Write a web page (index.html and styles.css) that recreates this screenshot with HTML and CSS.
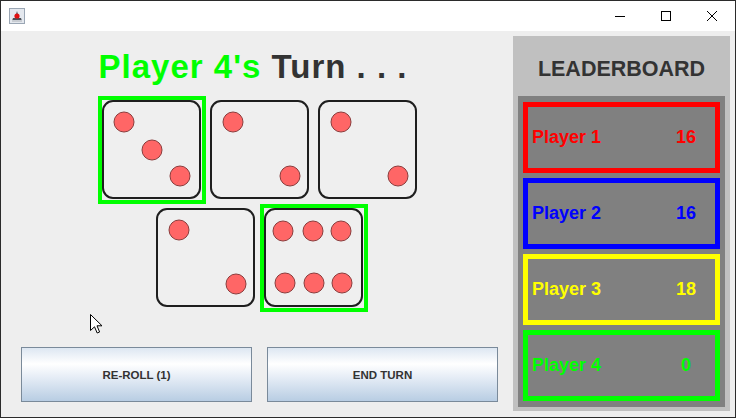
FILE: index.html
```html
<!DOCTYPE html>
<html>
<head>
<meta charset="utf-8">
<link rel="stylesheet" href="styles.css">
</head>
<body>
<div class="window">
  <div class="titlebar">
    <svg class="app-icon" width="16" height="16" viewBox="0 0 16 16">
      <rect x="0.5" y="0.5" width="15" height="15" fill="#e4e8ee" stroke="#9aa6b4"/>
      <path d="M3 13 L13 13 L12 10 L10 10 L8 3 L6 10 L4 10 Z" fill="#4a4f57"/>
      <rect x="3" y="12" width="10" height="2" fill="#c8ccd2"/>
      <circle cx="8" cy="8" r="2.6" fill="#e01010"/>
    </svg>
    <div class="controls">
      <svg class="ctl" width="46" height="30" viewBox="0 0 46 30"><path d="M18 15.5 H28" stroke="#000" stroke-width="1"/></svg>
      <svg class="ctl" width="46" height="30" viewBox="0 0 46 30"><rect x="18.5" y="10.5" width="9" height="9" fill="none" stroke="#000" stroke-width="1"/></svg>
      <svg class="ctl" width="46" height="30" viewBox="0 0 46 30"><path d="M18 10 L28 20 M28 10 L18 20" stroke="#000" stroke-width="1"/></svg>
    </div>
  </div>
  <div class="content">
    <div class="main">
      <div class="turn"><span class="turn-player">Player 4's</span> Turn . . .</div>
      <div class="dice">
        <div class="dice-row">
          <div class="cell sel">
            <svg class="die" viewBox="0 0 100 100"><rect x="1" y="1" width="97" height="97" rx="10"/><circle cx="22" cy="22" r="10"/><circle cx="50" cy="50" r="10"/><circle cx="78" cy="76" r="10"/></svg>
          </div>
          <div class="cell">
            <svg class="die" viewBox="0 0 100 100"><rect x="1" y="1" width="97" height="97" rx="10"/><circle cx="23" cy="22" r="10"/><circle cx="80" cy="76" r="10"/></svg>
          </div>
          <div class="cell">
            <svg class="die" viewBox="0 0 100 100"><rect x="1" y="1" width="97" height="97" rx="10"/><circle cx="23" cy="22" r="10"/><circle cx="80" cy="76" r="10"/></svg>
          </div>
        </div>
        <div class="dice-row">
          <div class="cell">
            <svg class="die" viewBox="0 0 100 100"><rect x="1" y="1" width="97" height="97" rx="10"/><circle cx="23" cy="22" r="10"/><circle cx="80" cy="76" r="10"/></svg>
          </div>
          <div class="cell sel">
            <svg class="die" viewBox="0 0 100 100"><rect x="1" y="1" width="97" height="97" rx="10"/><circle cx="19" cy="23" r="10"/><circle cx="49" cy="23" r="10"/><circle cx="77" cy="23" r="10"/><circle cx="21" cy="75" r="10"/><circle cx="50" cy="75" r="10"/><circle cx="78" cy="75" r="10"/></svg>
          </div>
        </div>
      </div>
      <div class="buttons">
        <button class="btn">RE-ROLL (1)</button>
        <button class="btn">END TURN</button>
      </div>
    </div>
    <div class="board">
      <div class="board-title">LEADERBOARD</div>
      <div class="board-list">
        <div class="card red"><span class="name">Player 1</span><span class="score">16</span></div>
        <div class="card blue"><span class="name">Player 2</span><span class="score">16</span></div>
        <div class="card yellow"><span class="name">Player 3</span><span class="score">18</span></div>
        <div class="card green"><span class="name">Player 4</span><span class="score">0</span></div>
      </div>
    </div>
  </div>
  <svg class="cursor" width="13" height="20" viewBox="0 0 13 20"><path d="M0.5 0.5 L0.5 16.5 L4.5 12.8 L7.2 19 L9.6 18 L7 11.8 L12 11.8 Z" fill="#fff" stroke="#000" stroke-width="1" stroke-linejoin="miter"/></svg>
</div>
</body>
</html>
```

FILE: styles.css
```css
* { box-sizing: border-box; }
html, body { margin: 0; padding: 0; }
body {
  width: 736px;
  height: 418px;
  overflow: hidden;
  font-family: "Liberation Sans", Arial, sans-serif;
  background: #fff;
}
.window {
  position: relative;
  width: 736px;
  height: 418px;
  border: 1px solid #2b2b2b;
  background: #eeeeee;
  display: flex;
  flex-direction: column;
}
.titlebar {
  height: 30px;
  background: #fff;
  display: flex;
  align-items: center;
  justify-content: space-between;
  padding-left: 8px;
}
.app-icon { display: block; margin-top: 0; }
.controls { display: flex; }
.ctl { display: block; }
.content {
  flex: 1;
  display: flex;
}
.main {
  width: 512px;
  padding: 0 14px 0 20px;
  display: flex;
  flex-direction: column;
}
.turn {
  margin-top: 16px;
  height: 40px;
  line-height: 40px;
  font-size: 33px;
  font-weight: bold;
  color: #333333;
  text-align: center;
  letter-spacing: 1px;
  padding-right: 14px;
  white-space: nowrap;
}
.turn-player { color: #00ff00; }
.dice {
  margin-top: 9px;
  display: flex;
  flex-direction: column;
  align-items: center;
}
.dice-row { display: flex; }
.cell {
  width: 108px;
  height: 108px;
  border: 4px solid transparent;
}
.cell.sel { border-color: #00ff00; }
.die { display: block; width: 100px; height: 100px; }
.die rect { fill: #efefef; stroke: #1e1e1e; stroke-width: 2; }
.die circle { fill: #ff6666; stroke: #8a3c3c; stroke-width: 1; }
.buttons {
  margin-top: 35px;
  display: flex;
  gap: 15px;
}
.btn {
  width: 231px;
  height: 55px;
  border: 1px solid #7a8a9a;
  background: linear-gradient(to bottom, #dde7f2 0%, #ffffff 30%, #e6edf6 55%, #b8cde3 100%);
  font-family: "Liberation Sans", Arial, sans-serif;
  font-weight: bold;
  font-size: 11.5px;
  color: #333333;
  padding: 0;
}
.board {
  width: 217px;
  margin: 5px 0 6px 0;
  background: #c0c0c0;
  padding: 0 5px 4px 5px;
  display: flex;
  flex-direction: column;
}
.board-title {
  height: 60px;
  padding-top: 6px;
  line-height: 54px;
  font-size: 21.5px;
  font-weight: bold;
  color: #333333;
  text-align: center;
}
.board-list {
  flex: 1;
  background: #808080;
  padding: 6px 5px;
  display: flex;
  flex-direction: column;
  gap: 5px;
}
.card {
  height: 71px;
  border: 5px solid;
  display: flex;
  align-items: center;
  font-size: 18px;
  font-weight: bold;
}
.name { flex: 1; padding-left: 4px; }
.score { width: 40px; text-align: center; margin-right: 9px; }
.red { border-color: #ff0000; color: #ff0000; }
.blue { border-color: #0000ff; color: #0000ff; }
.yellow { border-color: #ffff00; color: #ffff00; }
.green { border-color: #00ff00; color: #00ff00; }
.cursor {
  position: absolute;
  left: 89px;
  top: 313px;
}
```
